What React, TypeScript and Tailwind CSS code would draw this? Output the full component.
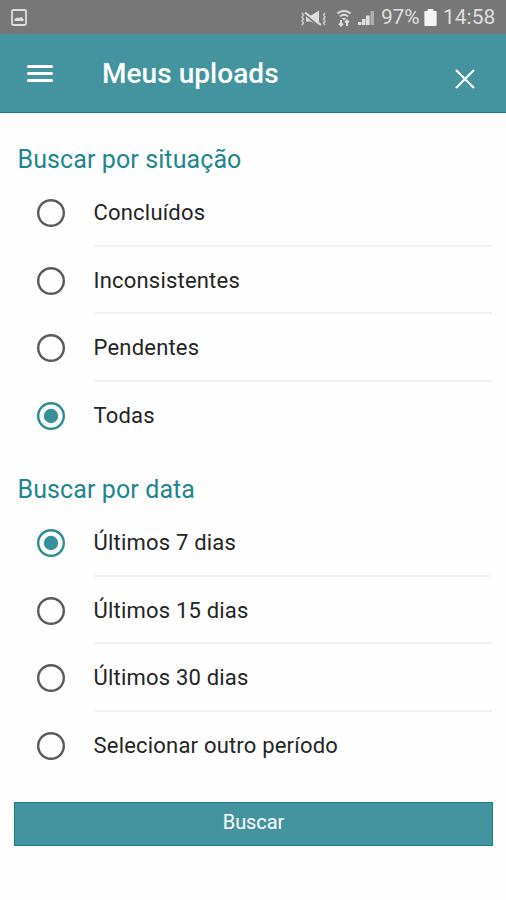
import { useState } from 'react'
import clsx from 'clsx'

const statusOptions = ['Concluídos', 'Inconsistentes', 'Pendentes', 'Todas']
const dateOptions = ['Últimos 7 dias', 'Últimos 15 dias', 'Últimos 30 dias', 'Selecionar outro período']

function StatusBar() {
  return (
    <div className="flex h-[34px] items-center bg-[#777777] pl-[11px] pr-[10px] pt-px text-[#dedede]">
      <svg width="16" height="17" viewBox="0 0 16 17" fill="none">
        <rect x="1" y="1" width="14" height="15" rx="1.5" stroke="currentColor" strokeWidth="1.8" />
        <path d="M3.5 12V10l2.500-1.500 2 .5L10.500 8l2 2v2z" fill="currentColor" />
      </svg>
      <div className="ml-auto flex items-center">
        <svg width="27" height="18" viewBox="0 0 27 18" fill="none" stroke="currentColor">
          <path d="M2 4l1.500 2L2 8l1.500 2L2 12l1.500 2L2 16M25 4l-1.500 2L25 8l-1.500 2 1.500 2-1.500 2 1.500 2" strokeWidth="1.500" opacity=".8" />
          <path d="M6 6.500h5l8-5v15.500l-8-4.500H6z" fill="currentColor" stroke="none" />
          <path d="M5 5.500L19 17" stroke="#777777" strokeWidth="1.800" />
          <path d="M5 3.500L21 16" strokeWidth="2" />
        </svg>
        <svg className="ml-[9px]" width="16" height="18" viewBox="0 0 16 18" fill="none" stroke="currentColor">
          <path d="M1.500 4.500C5 1.300 11 1.300 14.500 4.500M4 7.500c2.400-2 5.600-2 8 0" strokeWidth="2" />
          <path d="M5.500 9h5L8 11.500z" fill="currentColor" stroke="none" />
          <path d="M5 11v5M3.200 14.500L5 16.500l1.800-2M11 17v-5M9.200 13.500l1.800-2 1.800 2" strokeWidth="2" />
        </svg>
        <svg className="ml-[5px]" width="18" height="17" viewBox="0 0 18 17" fill="currentColor">
          <path d="M1 13h3.500v3H1zM5 10h3.500v6H5zM9 6.500h3.700v9.500H9z" />
          <path d="M13.500 2h3.500V16h-3.500z" opacity=".55" />
        </svg>
        <span className="ml-[6px] w-[41px] whitespace-nowrap text-[21px] leading-none tracking-[-0.2px]">97%</span>
        <svg className="ml-[2px]" width="13" height="17" viewBox="0 0 13 18" fill="#f3f3f3">
          <path d="M3.500 0h6v2H12q1 0 1 1v14q0 1-1 1H1q-1 0-1-1V3q0-1 1-1h2.500z" />
        </svg>
        <span className="ml-[6px] w-[53px] whitespace-nowrap text-[21px] leading-none">14:58</span>
      </div>
    </div>
  )
}

function Header() {
  return (
    <header className="flex h-[79px] items-center border-b border-[#16808a] bg-[#43949f] pl-[27px] pr-[31px] text-white">
      <button aria-label="Menu" className="flex w-[26px] flex-col gap-[4px]">
        <span className="h-[3px] rounded-sm bg-white" />
        <span className="h-[3px] rounded-sm bg-white" />
        <span className="h-[3px] rounded-sm bg-white" />
      </button>
      <h1 className="mt-[2px] ml-[49px] text-[28px] leading-8 font-medium tracking-[0.05px]">Meus uploads</h1>
      <button aria-label="Fechar" className="mt-[11px] ml-auto">
        <svg width="20" height="20" viewBox="0 0 20 20" fill="none" stroke="currentColor" strokeWidth="2.200">
          <path d="M1 1l18 18M19 1L1 19" />
        </svg>
      </button>
    </header>
  )
}

interface RadioGroupProps {
  title: string
  options: string[]
  value: string
  onChange: (value: string) => void
}

function RadioGroup({ title, options, value, onChange }: RadioGroupProps) {
  return (
    <section role="radiogroup" aria-label={title}>
      <h2 className="h-10 pt-px pl-[17.5px] text-[25px] leading-10 tracking-[0.1px] text-[#218591]">{title}</h2>
      {options.map((option, index) => (
        <button
          key={option}
          role="radio"
          aria-checked={option === value}
          onClick={() => onChange(option)}
          className="flex h-[67.5px] w-full items-center pl-[37px] pr-[14px] text-left"
        >
          <svg className="size-7 shrink-0" viewBox="0 0 28 28" fill="none">
            <circle
              cx="14"
              cy="14"
              r="12.8"
              strokeWidth="2.4"
              className={option === value ? 'stroke-[#2f8a95]' : 'stroke-[#5a5a5a]'}
            />
            {option === value && <circle cx="14" cy="14" r="7.2" className="fill-[#35909b]" />}
          </svg>
          <span
            className={clsx(
              'ml-[28.5px] flex h-full flex-1 items-center border-b-2 pt-px text-[22px] tracking-[0.2px] text-[#242424]',
              index < options.length - 1 ? 'border-[#f2f2f2]' : 'border-transparent',
            )}
          >
            {option}
          </span>
        </button>
      ))}
    </section>
  )
}

export default function App() {
  const [status, setStatus] = useState('Todas')
  const [date, setDate] = useState('Últimos 7 dias')

  return (
    <div className="h-[900px] w-[506px] overflow-hidden bg-[#fefefe] font-[Roboto,sans-serif]">
      <StatusBar />
      <Header />
      <main className="pt-[26.4px]">
        <RadioGroup title="Buscar por situação" options={statusOptions} value={status} onChange={setStatus} />
        <div className="mt-5">
          <RadioGroup title="Buscar por data" options={dateOptions} value={date} onChange={setDate} />
        </div>
        <div className="mt-[22.600px] pr-[13px] pl-[14px]">
          <button className="flex h-[44px] w-full items-center justify-center border border-[#16808a] bg-[#43949f] pb-[4px] text-[20px] tracking-[-0.1px] text-white">
            Buscar
          </button>
        </div>
      </main>
    </div>
  )
}
